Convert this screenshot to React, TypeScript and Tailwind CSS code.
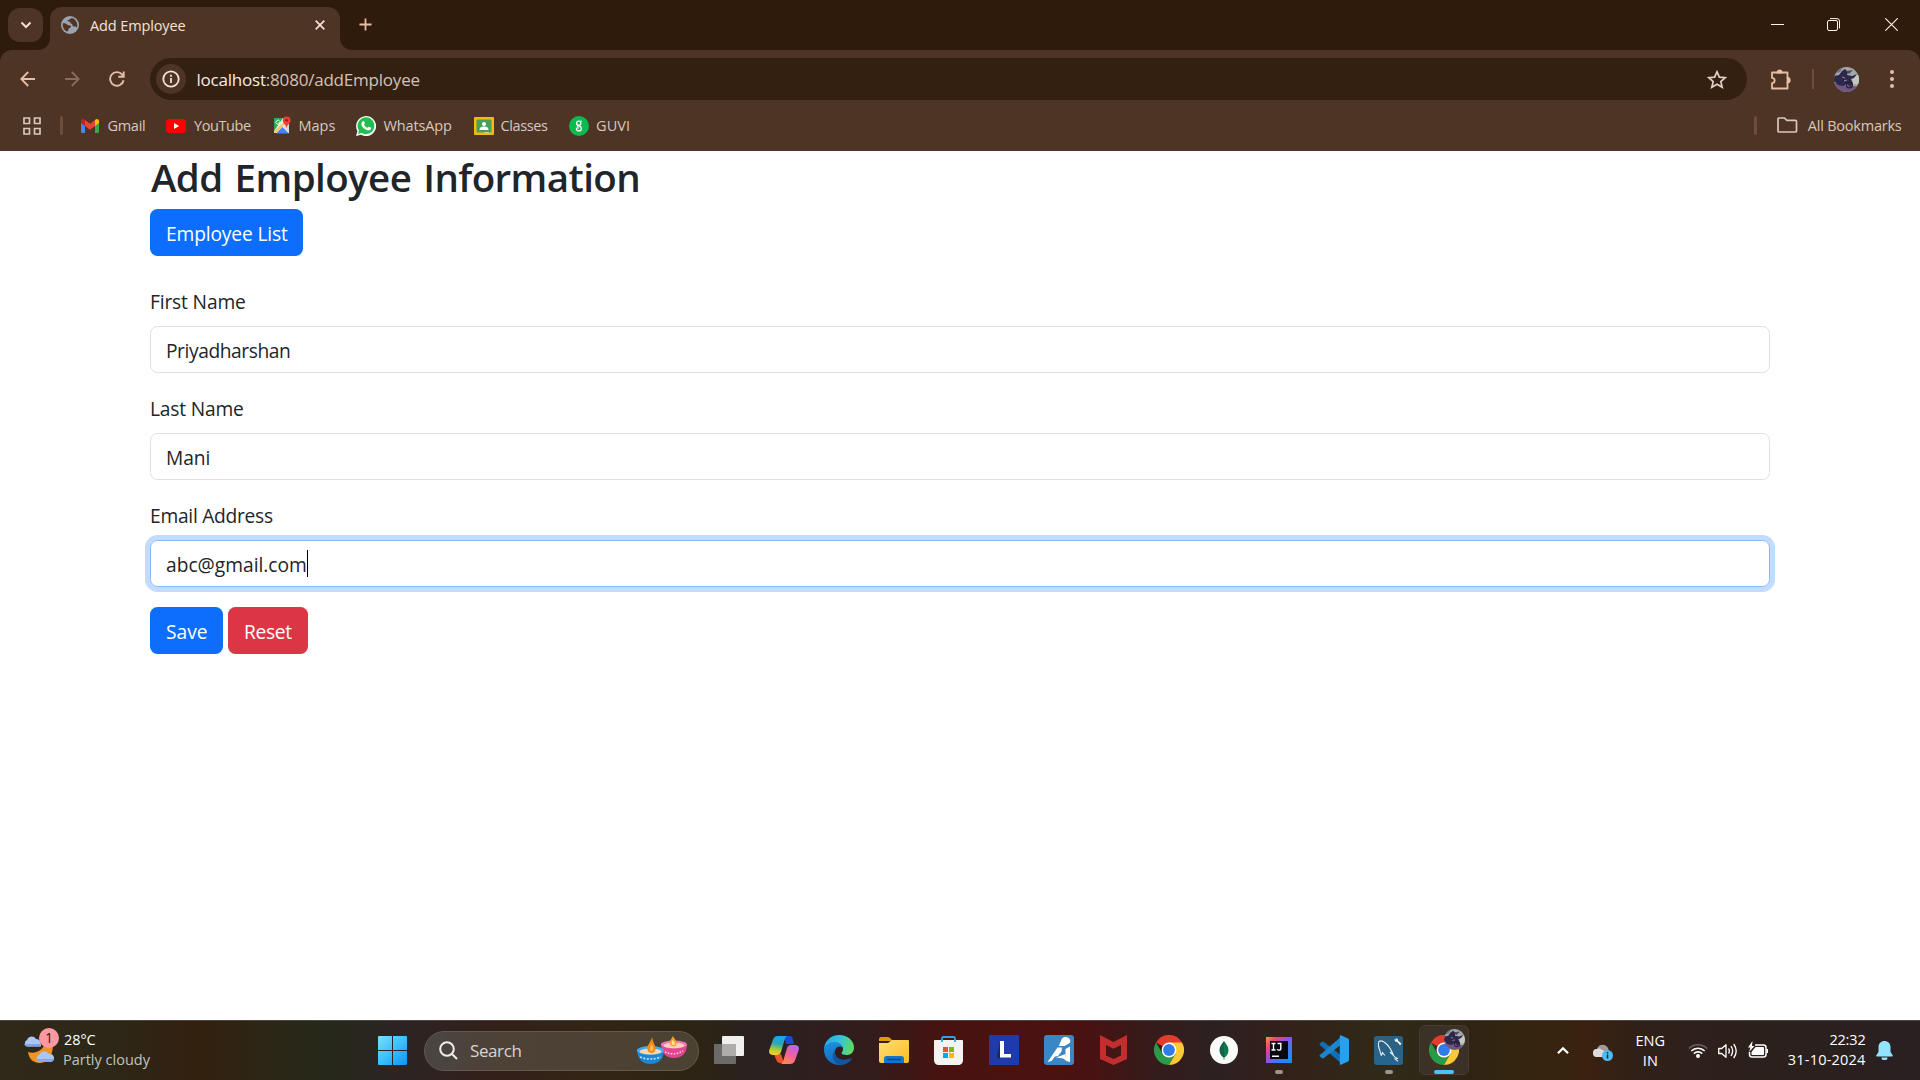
import React from 'react';

type IconProps = { className?: string };

function Globe() {
  return (
    <svg viewBox="0 0 18 18" className="size-[18px]">
      <circle cx="9" cy="9" r="9" fill="#9aa3ae" />
      <path d="M1.800 7.200C3.500 7 5 7.500 6.200 8.500c.5 1 1.500.8 2.800.9 1.300.3 1.300 1.600.3 2.200-1 .5-1.800 1-1.800 2-.1.900-.7 1.700-1.500 1.900C3.400 14.500 1.400 11.500 1.800 7.200z" fill="#4d3424" />
      <path d="M10.800 2c-.6.700-1.900.6-2.300 1.300-.4.800-1.800.5-1.900 1.500 0 1 1.300.7 2 .8.900.2.300 1.500 1.300 1.800 1.200.4 1.900 1 1.600 2 .3 1.300 2 .7 3 1.200.8.300 1.100.8 1.700.5.700-3.800-1.400-8-5.400-9.100z" fill="#4d3424" />
    </svg>
  );
}

function Chevron({ className }: IconProps) {
  return (
    <svg viewBox="0 0 12 8" className={className} fill="none" stroke="currentColor" strokeWidth="2">
      <path d="M1.500 1.500L6 6l4.500-4.500" />
    </svg>
  );
}

function TabStrip() {
  return (
    <div className="flex h-[50px] shrink-0 items-start bg-[#2e1b0c]">
      <div className="ml-2 mt-2 flex h-[34px] w-[35px] items-center justify-center rounded-xl bg-[#4d3424] text-[#f3dfd3]">
        <Chevron className="h-[8px] w-[12px]" />
      </div>
      <div className="ml-[7px] mt-[7px] flex h-[43px] w-[290px] rounded-t-xl bg-[#4d3424] pl-[11px] text-[#f3e2d8]">
        <div className="mt-[9px]"><Globe /></div>
        <div className="ml-[11px] mt-[5px] w-[220px] text-[14.5px] leading-[28px] tracking-[-0.12px]">Add Employee</div>
        <svg viewBox="0 0 10 10" className="ml-[5px] mt-[13px] size-[10px]" fill="none" stroke="currentColor" strokeWidth="1.700">
          <path d="M.7.7l8.600 8.600M9.300.7L.7 9.300" />
        </svg>
      </div>
      <svg viewBox="0 0 14 14" className="ml-[19px] mt-[18px] size-[13px]" fill="none" stroke="#e6bea5" strokeWidth="1.900">
        <path d="M7 .5v13M.5 7h13" />
      </svg>
      <div className="ml-auto flex pr-[22px] text-[#fff5ee]">
        <svg viewBox="0 0 13 1" className="mr-[43px] mt-[24px] h-px w-[13px]"><path d="M0 0h13v1H0z" fill="currentColor" /></svg>
        <svg viewBox="0 0 13 13" className="mr-[45px] mt-[18px] size-[13px]" fill="none" stroke="currentColor">
          <rect x=".5" y="2.500" width="10" height="10" rx="1.500" />
          <path d="M3 .6h7a2.500 2.500 0 0 1 2.500 2.500v7.300" />
        </svg>
        <svg viewBox="0 0 13 13" className="mt-[18px] size-[13px]" fill="none" stroke="currentColor" strokeWidth="1.100">
          <path d="M.3.3l12.400 12.400M12.700.3L.3 12.700" />
        </svg>
      </div>
      <svg viewBox="0 0 13 13" className="absolute left-[37px] top-[37px] size-[13px]"><path d="M13 0v13H0C8 13 13 8 13 0z" fill="#4d3424" /></svg>
      <svg viewBox="0 0 13 13" className="absolute left-[340px] top-[37px] size-[13px]"><path d="M0 0v13h13C5 13 0 8 0 0z" fill="#4d3424" /></svg>
    </div>
  );
}

function Avatar({ className }: IconProps) {
  return (
    <svg viewBox="0 0 25 25" className={className}>
      <defs>
        <clipPath id="face"><circle cx="12.500" cy="12.500" r="12.500" /></clipPath>
      </defs>
      <g clipPath="url(#face)">
        <path d="M0 0h25v25H0z" fill="#a3a8a6" />
        <path d="M0 0h9l-3 5-6 2z" fill="#6d7389" />
        <path d="M18 8h7v9h-6z" fill="#c3c9bd" />
        <path d="M0 16c8 1 15 4 25 3v6H0z" fill="#6d5681" />
        <path d="M0 9l5-1 3-4 3-2 3 3-1 3 5 1 5-2-3 4-3 1 2 5-3 3-3-3-4 2-5-1-3-3-3 1z" fill="#2f2749" />
        <path d="M12 4l7-1-4 4z" fill="#4b4a68" />
        <circle cx="15.500" cy="18" r="3" fill="none" stroke="#241c38" strokeWidth="1.200" />
        <path d="M8 10l3 1M10 14l3-1" stroke="#8f8ba4" />
      </g>
    </svg>
  );
}

function Toolbar() {
  return (
    <div className="flex h-[57px] shrink-0 items-center rounded-t-xl bg-[#4d3424] pt-px text-[#e6bea5]">
      <svg viewBox="0 0 16 16" className="ml-5 size-4" fill="none" stroke="currentColor" strokeWidth="1.800"><path d="M15 8H1.500M8.200 1L1.300 8l6.900 7" /></svg>
      <svg viewBox="0 0 16 16" className="ml-[28px] size-4 text-[#8a6c5a]" fill="none" stroke="currentColor" strokeWidth="1.800"><path d="M1 8h13.500M7.800 1l6.900 7-6.900 7" /></svg>
      <svg viewBox="0 0 16 16" className="ml-[29px] size-4" fill="none" stroke="currentColor" strokeWidth="1.900"><path d="M14.600 9.300A6.800 6.800 0 1 1 13.200 3.600L14.600 5.300M14.700.5v5.300H9.300" /></svg>
      <div className="ml-[25px] flex h-[42px] w-[1597px] items-center rounded-full bg-[#332011]">
        <div className="ml-[6px] flex size-[30px] items-center justify-center rounded-full bg-[#4d3424]">
          <svg viewBox="0 0 18 18" className="size-[18px] text-[#f3e2d8]" fill="none" stroke="currentColor" strokeWidth="1.800"><circle cx="9" cy="9" r="7.700" /><path d="M9 8v5M9 4.800v1.900" /></svg>
        </div>
        <div className="ml-[10.500px] pt-px text-[17px] leading-[24px] tracking-[-0.208px] text-[#d5c1b4]"><span className="text-[#f8ebe3]">localhost</span>:8080/addEmployee</div>
        <svg viewBox="0 0 20 19" className="ml-auto mr-[20px] h-[19px] w-5 text-[#e5d0c4]" fill="none" stroke="currentColor" strokeWidth="1.700"><path d="M10 1.800l2.400 5.400 5.900.5-4.500 3.900 1.400 5.700L10 14.300l-5.200 3 1.400-5.700L1.700 7.700l5.900-.5z" /></svg>
      </div>
      <svg viewBox="0 0 22 21" className="ml-[23px] h-[21px] w-[22px]" fill="none" stroke="currentColor" strokeWidth="1.800">
        <path d="M2 3.500h15.500v5.500a2.300 2.300 0 0 1 0 4.500v6H2v-5.300a2.600 2.600 0 0 0 0-5.300z" strokeLinejoin="round" />
        <path d="M7.400 3.500a2 2 0 0 1 4.200 0zM17.500 9a2.200 2.200 0 0 1 0 4.500z" fill="currentColor" />
      </svg>
      <div className="ml-[20px] h-5 w-0.5 bg-[#6d4d38]" />
      <Avatar className="ml-5 size-[25px]" />
      <svg viewBox="0 0 4 18" className="ml-[31px] h-[18px] w-1" fill="currentColor"><circle cx="2" cy="2" r="2" /><circle cx="2" cy="9" r="2" /><circle cx="2" cy="16" r="2" /></svg>
    </div>
  );
}

function Bookmarks() {
  return (
    <div className="flex h-[44px] shrink-0 bg-[#4d3424] text-[14.5px] leading-[37px] text-[#d9c8bc]">
      <svg viewBox="0 0 18 18" className="ml-[23px] mt-[10px] size-[18px]" fill="none" stroke="currentColor" strokeWidth="1.700">
        <path d="M1 1h5.500v5.500H1zM11.500 1H17v5.500h-5.500zM1 11.500h5.500V17H1zM11.500 11.500H17V17h-5.500z" />
      </svg>
      <div className="ml-[19px] mt-[9px] h-[19px] w-[2.5px] rounded bg-[#6d4d38]" />
      <svg viewBox="0 0 18 14" className="ml-[18.500px] mt-[12px] h-[14px] w-[18px]">
        <path d="M0 2v10.700c0 .7.600 1.300 1.300 1.300H4V6z" fill="#4285f4" />
        <path d="M14 6v8h2.700c.7 0 1.300-.6 1.300-1.300V2z" fill="#34a853" />
        <path d="M14 1v6l4-3V2.200C18 .4 16-.6 14.600.6z" fill="#fbbc04" />
        <path d="M4 7V1l5 3.800L14 1v6l-5 3.700z" fill="#ea4335" />
        <path d="M0 2.200V4l4 3V1L3.400.6C2-.6 0 .4 0 2.200z" fill="#c5221f" />
      </svg>
      <div className="ml-[8.500px] w-[58.500px] tracking-[-0.296px]">Gmail</div>
      <svg viewBox="0 0 20 14" className="mt-[12px] h-[14px] w-5"><rect width="20" height="14" rx="3.500" fill="#f00" /><path d="M8 4l5.200 3L8 10z" fill="#fff" /></svg>
      <div className="ml-[8px] w-[78.500px] tracking-[-0.412px]">YouTube</div>
      <svg viewBox="0 0 18 18" className="mt-[9px] size-[18px]">
        <path d="M1 2h15v15H1z" fill="#e8eaed" />
        <path d="M1 2h9L1 15z" fill="#34a853" />
        <path d="M1 15.500L14.500 2H16v2L3 17H1z" fill="#fbc117" opacity=".7" />
        <path d="M3 17.500L9.500 11l6.500 6.500z" fill="#4285f4" />
        <path d="M10 10l6 6V9z" fill="#d5d9de" />
        <path d="M13.500 12c-.3-3-3.700-4.300-3.700-7.700a3.900 3.900 0 0 1 7.800 0C17.600 7.700 13.900 9 13.500 12z" fill="#ea4335" />
        <circle cx="13.700" cy="4.300" r="1.400" fill="#8e2018" />
        <path d="M6.800 5.200a2 2 0 1 0 .2 1.600H5.300" fill="none" stroke="#fff" />
      </svg>
      <div className="ml-[8px] w-[57px]">Maps</div>
      <svg viewBox="0 0 20 20" className="mt-[9px] size-5">
        <path d="M0 20l1.400-5A10 10 0 1 1 5 18.700z" fill="#fff" />
        <path d="M2 18l1-3.500A8.400 8.400 0 1 1 5.700 17z" fill="#1fbf4f" />
        <path d="M6.700 5.200c.5-.5 1.200-.4 1.400.2l.7 1.600c.1.500-.9 1.300-.7 1.700.7 1.400 1.800 2.400 3.300 3 .4.200 1.200-1.100 1.600-1l1.800.9c.6.300.3 1.400-.2 2-1 1-2.500 1-4 .4C8 13 6.200 11 5.500 9 5.100 7.500 5.700 6 6.700 5.200z" fill="#fff" />
      </svg>
      <div className="ml-[8px] w-[90px] tracking-[-0.137px]">WhatsApp</div>
      <svg viewBox="0 0 20 18" className="mt-[10px] h-[18px] w-5">
        <rect width="20" height="18" rx="1" fill="#f6b90f" />
        <path d="M2.500 2.500h15v13h-15z" fill="#48a05c" />
        <circle cx="10" cy="7" r="2" fill="#fff" />
        <path d="M5.500 13c0-3 2.500-3.500 4.500-3.500s4.500.5 4.500 3.500z" fill="#fff" />
        <path d="M10.500 15h4.500v1h-4.500z" fill="#fff" opacity=".5" />
      </svg>
      <div className="ml-[7px] w-[68px] tracking-[-0.386px]">Classes</div>
      <svg viewBox="0 0 20 20" className="mt-[9px] size-5">
        <circle cx="10" cy="10" r="10" fill="#0cba4d" />
        <circle cx="9.700" cy="7.200" r="2.100" fill="none" stroke="#fff" strokeWidth="1.300" />
        <path d="M11.300 5.700l1.300-.9M7.800 10.200c1.200-.7 4.600-.5 4.600 2.200 0 3.300-5 3.300-5 .7 0-1.200 1.500-1.600 2.400-.8" fill="none" stroke="#fff" strokeWidth="1.300" />
      </svg>
      <div className="ml-[7.500px] tracking-[0.1px]">GUVI</div>
      <div className="ml-auto mt-[9px] h-[19px] w-[2.5px] rounded bg-[#6d4d38]" />
      <svg viewBox="0 0 21 16" className="ml-[20px] mt-[10px] h-4 w-[21px]" fill="none" stroke="currentColor" strokeWidth="1.700" strokeLinejoin="round"><path d="M1.800 1h5.700l2.300 2.300h8.700c.6 0 1 .4 1 1V14c0 .6-.4 1-1 1H2c-.6 0-1-.4-1-1V1.800c0-.4.300-.8.800-.8z" /></svg>
      <div className="ml-[10px] mr-[18.500px] tracking-[-0.226px]">All Bookmarks</div>
    </div>
  );
}

function Page() {
  return (
    <main className="flex-1 bg-white px-[150px] text-[19.2px] leading-[30px] text-[#212529]">
      <h1 className="h-[58px] pl-px pt-[2px] text-[38.5px] font-semibold leading-[48px] tracking-[-0.58px] [word-spacing:2.5px]">Add Employee Information</h1>
      <button className="flex h-[47px] w-[153px] items-center rounded-[7.500px] bg-[#0d6efd] pl-4 pt-[2px] tracking-[-0.142px] text-white">Employee List</button>
      <div className="mt-[30px] flex flex-col gap-5">
        <div className="flex flex-col gap-[10px]">
          <label className="h-[30px] pt-px tracking-[-0.159px]">First Name</label>
          <div className="flex h-[47px] items-center rounded-[7.500px] border border-[#dee2e6] pl-[15px] pt-[2px] tracking-[-0.424px]">Priyadharshan</div>
        </div>
        <div className="flex flex-col gap-[10px]">
          <label className="h-[30px] pt-px tracking-[-0.190px]">Last Name</label>
          <div className="flex h-[47px] items-center rounded-[7.500px] border border-[#dee2e6] pl-[15px] pt-[2px] tracking-[-0.062px]">Mani</div>
        </div>
        <div className="flex flex-col gap-[10px]">
          <label className="h-[30px] pt-px tracking-[-0.261px]">Email Address</label>
          <div className="flex h-[47px] items-center rounded-[7.500px] border border-[#86b7fe] pl-[15px] pt-[2px] ring-[5px] ring-[#c2dbfe]">
            abc@gmail.com<span className="-mt-[3px] h-[27px] w-px bg-black" />
          </div>
        </div>
        <div className="flex gap-[5px] text-white">
          <button className="flex h-[47px] w-[73px] items-center rounded-[7.500px] bg-[#0d6efd] pl-4 pt-[2px]">Save</button>
          <button className="flex h-[47px] w-[80px] items-center rounded-[7.500px] bg-[#dc3545] pl-4 pt-[2px] tracking-[-0.3px]">Reset</button>
        </div>
      </div>
    </main>
  );
}

function WindowsLogo() {
  return (
    <svg viewBox="0 0 29 29" className="size-[29px]">
      <defs><linearGradient id="win" x1="0" y1="0" x2="1" y2="1"><stop stopColor="#7fdcff" /><stop offset=".5" stopColor="#3cc0fb" /><stop offset="1" stopColor="#0c93f5" /></linearGradient></defs>
      <path d="M1 0h13v14H0V1a1 1 0 0 1 1-1zM15 0h13a1 1 0 0 1 1 1v13H15zM0 15h14v14H1a1 1 0 0 1-1-1zM15 15h14v13a1 1 0 0 1-1 1H15z" fill="url(#win)" />
    </svg>
  );
}

function Lamps() {
  return (
    <svg viewBox="0 0 50 28" className="h-7 w-[50px]">
      <path d="M24 7c0 9 4 15 13 15s13-6 13-14z" fill="#e0478f" />
      <ellipse cx="37" cy="8.500" rx="13" ry="4" fill="#f277b2" />
      <ellipse cx="37" cy="9.500" rx="10.500" ry="2.800" fill="#f9cfc0" />
      <path d="M28 16q9 4 18-1" fill="none" stroke="#ffd5e8" strokeWidth="1.500" strokeDasharray="1.500 1.500" />
      <path d="M36 0c-2 4-4 5-3 8 .7 3 6 3 6.500 0C40 4 37 3 36 0z" fill="#f6a02c" />
      <path d="M35.500 4c-1.500 3-1 5 1 5s2-3-1-5z" fill="#ffe08a" />
      <path d="M0 13c0 9 5 15 13.500 15S27 22 27 14z" fill="#1d87d6" />
      <ellipse cx="13.500" cy="14.500" rx="13.500" ry="4.500" fill="#41a9ec" />
      <ellipse cx="13.500" cy="15.500" rx="11" ry="3" fill="#f6d9b2" />
      <path d="M3 21q10 4 21 0" fill="none" stroke="#b6e2ff" strokeWidth="1.700" strokeDasharray="2 1.500" />
      <path d="M15 1c-1 6-6 8-4.500 13 1 4 7 4 8 0 .9-4-3-8-3.500-13z" fill="#f28a1c" />
      <path d="M14.500 8c-2 4-2 7 0 7s3-3 0-7z" fill="#ffc04a" />
    </svg>
  );
}

function TaskView() {
  return (
    <svg viewBox="0 0 30 28" className="h-7 w-[30px]">
      <rect x="8" width="22" height="20" rx="1" fill="#f0f0f0" />
      <rect y="8" width="22" height="20" rx="1" fill="#6d6b6a" />
      <path d="M8 8h14v12H8z" fill="#aeadac" />
    </svg>
  );
}

function Copilot() {
  return (
    <svg viewBox="0 0 30 28" className="h-7 w-[30px]">
      <defs>
        <linearGradient id="cpA" x1=".5" y1="0" x2=".3" y2="1"><stop stopColor="#17a6e8" /><stop offset=".4" stopColor="#2aa7b5" /><stop offset=".75" stopColor="#b8cf2b" /><stop offset="1" stopColor="#f7d02c" /></linearGradient>
        <linearGradient id="cpB" x1=".8" y1="0" x2=".3" y2="1"><stop stopColor="#b368f0" /><stop offset=".5" stopColor="#ee5f9f" /><stop offset="1" stopColor="#fd8a4c" /></linearGradient>
      </defs>
      <path d="M15 0h6c2 0 2.500 2 3 4l1 4h-8z" fill="#1b4ad8" />
      <path d="M5 19l7-1 3 9H11c-2 0-3-1-3.500-3z" fill="#e8552d" />
      <path d="M9 0h10c-2 0-3 2-3.500 4L12 16c-.8 2-2 3-4 3H4c-3 0-4.500-2-3.700-5L4 3.500C5 1 6.500 0 9 0z" fill="url(#cpA)" />
      <path d="M21 28H11c2 0 3-2 3.500-4L18 12c.8-2 2-3 4-3h4c3 0 4.500 2 3.700 5L26 24.500C25 27 23.500 28 21 28z" fill="url(#cpB)" />
    </svg>
  );
}

function Edge() {
  return (
    <svg viewBox="0 0 30 30" className="size-[30px]">
      <defs>
        <linearGradient id="edA" x1="0" y1=".3" x2="1" y2=".5"><stop stopColor="#2ba8e8" /><stop offset=".5" stopColor="#31c4dc" /><stop offset="1" stopColor="#62dc5c" /></linearGradient>
        <linearGradient id="edB" x1=".3" y1="0" x2=".6" y2="1"><stop stopColor="#1c8fdf" /><stop offset="1" stopColor="#1464b4" /></linearGradient>
      </defs>
      <path d="M0 15C0 6 7 0 15 0c9 0 15 6 15 12.500 0 5-3.500 7.500-7.500 7.500-3 0-5-1-5-2 0-.8 1.500-1.500 1.500-4 0-3-3-5-7-5-7 0-12 3-12 6z" fill="url(#edA)" />
      <path d="M0 15C0 10 5 7 10.500 7c4.500 0 7.500 2.500 8.300 5.500C14 9.500 10 14 11 19c1 5 7 8 17 4.500C25 28 20 30 15 30 7 30 0 23.500 0 15z" fill="url(#edB)" />
      <path d="M11 15c-1.500 6 4 13 17 8-3 5-8 7-12 7-6-2-10-9-5-15z" fill="#1356a0" />
    </svg>
  );
}

function Explorer() {
  return (
    <svg viewBox="0 0 30 26" className="h-[26px] w-[30px]">
      <defs><linearGradient id="fol" x1="0" y1="0" x2="1" y2="1"><stop stopColor="#ffdd76" /><stop offset="1" stopColor="#fbbc22" /></linearGradient></defs>
      <path d="M0 2c0-1 .8-2 2-2h7c1 0 2 .8 3 2l2 2H0z" fill="#dc9a0d" />
      <path d="M0 6h9l4-3h16c.6 0 1 .5 1 1v20c0 1-1 2-2 2H2c-1 0-2-1-2-2z" fill="url(#fol)" />
      <path d="M5 26v-4.500C5 20 6 19 7.500 19h15c1.500 0 2.500 1 2.500 2.500V26z" fill="#1674cc" />
      <path d="M8 22.500h14" stroke="#0b4a8f" strokeWidth="1.500" />
    </svg>
  );
}

function Store() {
  return (
    <svg viewBox="0 0 29 29" className="size-[29px]">
      <path d="M8 6V2.500C8 1.500 8.500 1 9.500 1h10c1 0 1.500.5 1.500 1.500V6" fill="none" stroke="#29a8e6" strokeWidth="1.800" />
      <path d="M0 5c0-.5.500-1 1-1h27c.5 0 1 .5 1 1v19c0 3-2 5-5 5H5c-3 0-5-2-5-5z" fill="#f3f3f3" />
      <path d="M7.100 4h1.800v2H7.100zM20.100 4h1.800v2h-1.800z" fill="#29a8e6" />
      <path d="M9 11h5v5H9z" fill="#f25022" /><path d="M15 11h5v5h-5z" fill="#7fba00" /><path d="M9 17h5v5H9z" fill="#00a4ef" /><path d="M15 17h5v5h-5z" fill="#ffb900" />
    </svg>
  );
}

function LApp() {
  return (
    <svg viewBox="0 0 30 30" className="size-[30px]">
      <path d="M0 0h30v30H0z" fill="#1e3aab" />
      <path d="M11 7l-3 14 2 3 5-4z" fill="#0d3057" />
      <path d="M11 6h4v13h7v3.500H11z" fill="#fff" />
    </svg>
  );
}

function AiApp() {
  return (
    <svg viewBox="0 0 30 30" className="size-[30px]">
      <rect width="30" height="30" rx="3" fill="#3a87c6" />
      <path d="M18 3.500c1-1.500 3-2 5-1.300 2 .7 3.300 1.800 3.300 3.500 0 1.300-.5 2.300-1.800 3L20.500 11h-5.700z" fill="#fff" />
      <path d="M13.500 12.500h4.500l-.5 4-3.500 4.500-3 .5L7.500 26l-4 1z" fill="#fff" />
      <path d="M21.500 14l4.500-2.500V27l-4.500-1.500z" fill="#fff" />
      <path d="M12 22.500l9.500-3.500v3L25 27l-6-3.500z" fill="#fff" />
    </svg>
  );
}

function McAfee() {
  return (
    <svg viewBox="0 0 27 30" className="h-[30px] w-[27px]">
      <path d="M0 0l13.500 7L27 0v24l-13.500 6L0 24zM6 10v10.500l7.500 3.500 7.500-3.500V10l-7.500 3.800z" fill="#c12e2d" fillRule="evenodd" />
    </svg>
  );
}

function Chrome() {
  return (
    <svg viewBox="0 0 30 30" className="size-[30px]">
      <path d="M15 15L2 7.500A15 15 0 0 1 28 7.500z" fill="#e33b2e" />
      <path d="M15 30A15 15 0 0 1 2 7.500L8.500 18.700l13 0z" fill="#2a9a49" />
      <path d="M15 7.500h13A15 15 0 0 1 15 30l6.500-11.200z" fill="#fcc934" />
      <circle cx="15" cy="15" r="7.400" fill="#fff" />
      <circle cx="15" cy="15" r="5.900" fill="#2f7be8" />
    </svg>
  );
}

function Mongo() {
  return (
    <svg viewBox="0 0 28 28" className="size-7">
      <circle cx="14" cy="14" r="14" fill="#fbfbfa" />
      <path d="M14 5c2 3 4.500 5 4.500 9.500 0 3.500-2 5.500-4.500 7.500z" fill="#0a7b4d" />
      <path d="M14 5c-2 3-4.500 5-4.500 9.500 0 3.500 2 5.500 4.500 7.500z" fill="#16634a" />
      <path d="M14 21v3" stroke="#7f9c91" />
    </svg>
  );
}

function Idea() {
  return (
    <svg viewBox="0 0 26 26" className="size-[26px]">
      <defs><linearGradient id="ij" x1="0" y1="0" x2="1" y2=".9"><stop stopColor="#fd9a3c" /><stop offset=".22" stopColor="#f5456e" /><stop offset=".45" stopColor="#a04be0" /><stop offset=".7" stopColor="#3d7bf5" /><stop offset="1" stopColor="#1391f2" /></linearGradient></defs>
      <path d="M0 0h26v26H0z" fill="url(#ij)" />
      <path d="M4 4h18v18H4z" fill="#0b0610" />
      <path d="M5.500 6.500h4M7.500 6.500V13M5.500 13h4M11.500 6.500h3.300v4.700c0 1.300-.6 1.900-1.800 1.900-.8 0-1.500-.3-1.800-.9M6 19.300h7" fill="none" stroke="#fff" strokeWidth="1.400" />
    </svg>
  );
}

function VsCode() {
  return (
    <svg viewBox="0 0 30 30" className="size-[30px]">
      <path d="M1 8.500l2-1.700c.5-.4 1-.4 1.500 0L23 21v8L.8 10c-.4-.4-.3-1.100.2-1.500z" fill="#0f6fb5" />
      <path d="M1 21.500l2 1.700c.5.400 1 .4 1.500 0L23 9V1L.8 20c-.4.400-.3 1.100.2 1.500z" fill="#1b86cd" />
      <path d="M22 .3l7 3.200c.6.300 1 .9 1 1.500v20c0 .6-.4 1.200-1 1.500l-7 3.200c-.7.300-1.200 0-1.200-.7V1c0-.7.500-1 1.200-.7z" fill="#27a1ee" />
    </svg>
  );
}

function MySql() {
  return (
    <svg viewBox="0 0 29 29" className="size-[29px]">
      <defs><linearGradient id="sq" x1="0" y1="0" x2="0" y2="1"><stop stopColor="#2c6180" /><stop offset="1" stopColor="#26658f" /></linearGradient></defs>
      <rect width="29" height="29" rx="3" fill="url(#sq)" />
      <path d="M7.500 19.500c-1-1-1-3-1.700-5C4.500 11 3.500 8 5 5.500c2-1.500 5 0 8 3 3.500 3.500 5 7 6.500 11 1 2 2.500 2.500 4.500 3l-3 .3 3 2.500M7.500 19.500l1-3 2.500 3M19 19l-3-3" fill="none" stroke="#e3edf3" strokeWidth="1.100" />
      <path d="M20.500 3c0 2 1 3 2.500 2.800l3 3.500 1.500-1.500-3.300-3c0-1.500-1-2.600-2.700-2.500l1 1.800z" fill="#fff" />
    </svg>
  );
}

const apps = [
  { Icon: TaskView }, { Icon: Copilot }, { Icon: Edge }, { Icon: Explorer }, { Icon: Store }, { Icon: LApp }, { Icon: AiApp },
  { Icon: McAfee }, { Icon: Chrome }, { Icon: Mongo }, { Icon: Idea, open: true }, { Icon: VsCode }, { Icon: MySql, open: true },
];

function Weather() {
  return (
    <div className="relative ml-[24px] h-full w-[39px]">
      <svg viewBox="0 0 32 30" className="absolute left-0 top-[13px] h-[30px] w-8">
        <path d="M4 18c6 2 12 0 16-6l8-4c3 9-3 21-12 21C9 29 5 25 4 18z" fill="#ef9422" />
        <path d="M3 12.500a3.500 3.500 0 0 1 0-6.500C4 2 10 1 12 5c4 0 5 3 5 7.500z" fill="#a9c6f5" />
        <path d="M0 10c1 2 2 2.500 4 2.500h12V10z" fill="#7fa5e8" />
        <path d="M15.500 28a3.700 3.700 0 0 1 0-7.200c1-4 7-5 9-1 4 0 5.500 2 5.500 4.500S28 28 26 28z" fill="#a9c6f5" />
        <path d="M12.700 25c.7 2 1.800 3 3.800 3H26c2 0 3.500-1 4-3z" fill="#86a9ea" />
      </svg>
      <div className="absolute left-[15px] top-[7px] flex size-5 items-center justify-center rounded-full bg-[#ff98a2] text-[14px] leading-none text-[#2b1a1a]">1</div>
    </div>
  );
}

function Taskbar() {
  return (
    <footer className="flex h-[60px] shrink-0 items-center border-t border-[#4c4540] bg-[linear-gradient(90deg,#2e2918_0px,#2d2717_110px,#33200f_200px,#2c2616_265px,#26281a_325px,#2c2424_400px,#33201a_490px,#332516_600px,#2c2414_700px,#2b2120_760px,#331c1c_870px,#48120f_950px,#4a1312_1040px,#491212_1090px,#371a19_1140px,#2c2122_1220px,#33201a_1275px,#302a18_1390px,#2f2414_1470px,#33260f_1510px,#3a2110_1590px,#30201a_1640px,#2b201c_1780px,#2a2022_1920px)] text-[14.5px] leading-5 text-white">
      <Weather />
      <div className="w-[315px] pb-px">
        <div className="pl-px tracking-[-0.097px]">28°C</div>
        <div className="tracking-[0px] text-[#c5c2bd]">Partly cloudy</div>
      </div>
      <WindowsLogo />
      <div className="ml-[17px] flex h-10 w-[275px] items-center rounded-full border border-[#625850] bg-[linear-gradient(90deg,#4a4541,#4e4136_30%,#4b4232)]">
        <svg viewBox="0 0 19 19" className="ml-[14px] size-[19px]" fill="none" stroke="#f1eeea" strokeWidth="2"><circle cx="8" cy="8" r="6.800" /><path d="M13 13l5 5" /></svg>
        <div className="ml-[12px] text-[17px] tracking-[-0.4px] text-[#d8d4cf]">Search</div>
        <div className="ml-auto mr-[11px] pb-px"><Lamps /></div>
      </div>
      <div className="ml-[2px] flex h-full">
        {apps.map(({ Icon, open }, i) => (
          <div key={i} className="relative flex w-[55px] items-center justify-center pb-px">
            <Icon />
            {open && <span className="absolute bottom-[6px] h-1 w-2 rounded-full bg-[#9d948e]" />}
          </div>
        ))}
        <div className="relative ml-[3px] mt-1 flex h-[50px] w-[50px] items-center justify-center rounded-md border border-[#463b30] bg-[#3b3126]">
          <Chrome />
          <span className="absolute right-[3px] top-[3px]"><Avatar className="size-[21px]" /></span>
          <span className="absolute bottom-0 h-1 w-5 rounded-full bg-[#4cc2ff]" />
        </div>
      </div>
      <div className="ml-auto flex h-full items-center">
        <Chevron className="mr-[23px] h-[9px] w-[14px] rotate-180" />
        <svg viewBox="0 0 20 17" className="mr-[22px] mt-[3px] h-[17px] w-5">
          <path d="M4 13a4 4 0 0 1 0-8c1.500-5 8-6 11-1 1 2 1 4 0 5l-4 4z" fill="#a09b98" />
          <path d="M4 13a4 4 0 0 1 0-8c2-1 4 0 5 1 2 0 3 2 2 4l-1 3z" fill="#dedcda" />
          <circle cx="14.500" cy="11.500" r="5.500" fill="#4cbcf5" />
          <path d="M14.500 10.500v4M14.500 8v1.500" stroke="#162a38" strokeWidth="1.500" />
        </svg>
        <div className="mr-[22px] w-[31px] text-center text-[14.5px]">ENG<br />IN</div>
        <svg viewBox="0 0 20 15" className="mr-[10px] h-[15px] w-5" fill="none" stroke="#fff" strokeWidth="1.600">
          <path d="M.8 5.500a13 13 0 0 1 18.400 0" stroke="#695f5a" /><path d="M3.300 8a9.500 9.500 0 0 1 13.400 0M5.800 10.600a6 6 0 0 1 8.400 0" /><circle cx="10" cy="13" r="1.200" fill="#fff" />
        </svg>
        <svg viewBox="0 0 20 18" className="mr-[10px] h-[18px] w-5" fill="none" stroke="#fff" strokeWidth="1.300">
          <path d="M.7 6.500v5h3L8 15.300V2.700L3.700 6.500z" strokeLinejoin="round" /><path d="M10.500 6.500q1.800 2.500 0 5M13 4.200q3.300 4.800 0 9.600M15.700 2q5 7 0 14" />
        </svg>
        <svg viewBox="0 0 20 17" className="mb-[2px] mr-[20px] h-[17px] w-5">
          <path d="M7 4h8.500A2.500 2.500 0 0 1 18 6.500v7a2.500 2.500 0 0 1-2.500 2.500H4A2.500 2.500 0 0 1 1.500 13.500V11" fill="none" stroke="#fff" strokeWidth="1.500" />
          <path d="M7.500 6H15c.6 0 1 .4 1 1v6c0 .6-.4 1-1 1H4.500c-.6 0-1-.4-1-1v-2zM18.500 8H20v4h-1.500zM4.500 0L0 6.500h2.500L1 11l5.500-6H4z" fill="#fff" />
        </svg>
        <div className="mr-[10.500px] pb-px text-right">
          <div className="tracking-[-0.170px]">22:32</div>
          <div className="tracking-[0.2px]">31-10-2024</div>
        </div>
        <svg viewBox="0 0 17 19" className="mr-[27px] h-[19px] w-[17px]" fill="#91e3ff"><path d="M8.500 0c3.500 0 6 2.600 6 6v5l2.200 3.200c.3.500 0 1.300-.7 1.300H1c-.7 0-1-.8-.7-1.300L2.500 11V6c0-3.400 2.500-6 6-6zM5.500 16.500h6a3 3 0 0 1-6 0z" /></svg>
      </div>
    </footer>
  );
}

export default function App() {
  return (
    <div className="relative flex h-[1080px] w-[1920px] flex-col overflow-hidden bg-[#2e1b0c] font-['Open_Sans','Noto_Sans',sans-serif]">
      <TabStrip />
      <Toolbar />
      <Bookmarks />
      <Page />
      <Taskbar />
    </div>
  );
}
